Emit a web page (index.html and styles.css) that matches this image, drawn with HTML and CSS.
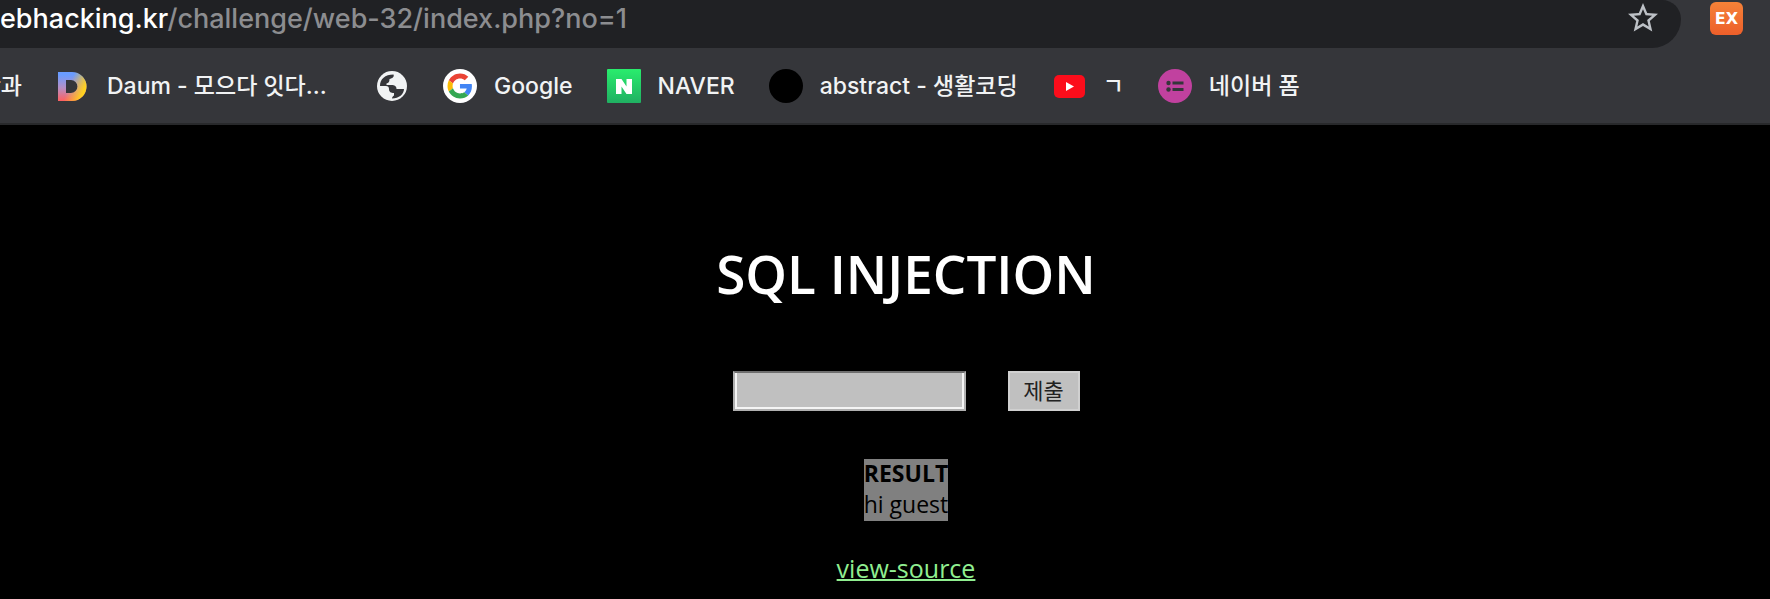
FILE: index.html
```html
<!DOCTYPE html>
<html lang="ko">
<head>
  <meta charset="UTF-8" />
  <meta name="viewport" content="width=device-width, initial-scale=1.0" />
  <title>SQL INJECTION</title>
  <link rel="stylesheet" href="styles.css">
</head>
<body>
  <header class="toolbar">
    <div class="address">
      <p class="url"><span class="host">ebhacking.kr</span>/challenge/web-32/index.php?no=1</p>
      <button class="star" aria-label="Bookmark">
        <svg width="36" height="36" viewBox="0 0 24 24" fill="#bdc1c6"><path d="M22 9.24l-7.19-.62L12 2 9.19 8.63 2 9.24l5.46 4.73L5.82 21 12 17.27 18.18 21l-1.63-7.03L22 9.24zM12 15.4l-3.76 2.27 1-4.28-3.32-2.88 4.38-.38L12 6.1l1.71 4.04 4.38.38-3.32 2.88 1 4.28L12 15.4z"/></svg>
      </button>
    </div>
    <button class="extension">EX</button>
  </header>

  <nav class="bookmarks">
    <a class="bookmark clipped" href="#">학과</a>
    <a class="bookmark long" href="#">
      <svg class="icon" viewBox="0 0 34 34">
        <defs>
          <linearGradient id="daum" x1="0" y1="0" x2="0" y2="1"><stop offset="0.1" stop-color="#6a9cff"/><stop offset="0.55" stop-color="#b78fc4"/><stop offset="1" stop-color="#ff5f5f"/></linearGradient>
          <linearGradient id="daumRight" x1="0" y1="0" x2="1" y2="0.4"><stop offset="0.5" stop-color="#ffc820" stop-opacity="0"/><stop offset="1" stop-color="#ffd21f"/></linearGradient>
        </defs>
        <path fill="url(#daum)" fill-rule="evenodd" d="M2 3h14a14.500 14.500 0 0 1 0 29H2zM10 11v13h5a6.500 6.500 0 0 0 0-13z"/>
        <path fill="url(#daumRight)" fill-rule="evenodd" d="M2 3h14a14.500 14.500 0 0 1 0 29H2zM10 11v13h5a6.500 6.500 0 0 0 0-13z"/>
      </svg>
      <span>Daum - 모으다 잇다...</span>
    </a>
    <a class="bookmark" href="#" aria-label="Page">
      <svg class="icon" viewBox="0 0 34 34">
        <circle cx="17" cy="17" r="15" fill="#f1f3f4"/>
        <path fill="#35363a" d="M5 17C5 10 10 5.500 18.500 5.500c1 2-1 4-4 4.500 0 3-1 4-3 4.500v1.500h5c3 0 5 1 5 4h7.500c0 5-5 9.500-12 9.500 0-1.500 1-2.500 2-3v-2.500c-3 0-5-1-5-4 0-2-1-3-3-3z"/>
      </svg>
    </a>
    <a class="bookmark" href="#">
      <svg class="icon" viewBox="0 0 34 34">
        <circle cx="17" cy="17" r="17" fill="#fff"/>
        <g transform="translate(4.500 4.500) scale(.52)">
          <path fill="#EA4335" d="M24 9.500c3.540 0 6.710 1.220 9.210 3.600l6.850-6.850C35.900 2.380 30.470 0 24 0 14.620 0 6.510 5.380 2.560 13.220l7.980 6.190C12.430 13.720 17.740 9.500 24 9.500z"/>
          <path fill="#4285F4" d="M46.980 24.550c0-1.570-.15-3.090-.38-4.550H24v9.020h12.940c-.58 2.960-2.260 5.480-4.780 7.180l7.730 6c4.510-4.180 7.090-10.360 7.090-17.650z"/>
          <path fill="#FBBC05" d="M10.530 28.590c-.48-1.450-.76-2.990-.76-4.590s.27-3.140.76-4.590l-7.980-6.190C.92 16.460 0 20.120 0 24c0 3.880.92 7.540 2.560 10.780l7.970-6.190z"/>
          <path fill="#34A853" d="M24 48c6.480 0 11.930-2.130 15.890-5.810l-7.730-6c-2.150 1.450-4.920 2.300-8.160 2.300-6.260 0-11.570-4.220-13.470-9.910l-7.980 6.190C6.510 42.620 14.620 48 24 48z"/>
        </g>
      </svg>
      <span>Google</span>
    </a>
    <a class="bookmark" href="#">
      <svg class="icon" viewBox="0 0 34 34">
        <defs><linearGradient id="naver" x1="0" y1="0" x2="0" y2="1"><stop offset="0" stop-color="#29ed6d"/><stop offset="1" stop-color="#20b062"/></linearGradient></defs>
        <rect width="34" height="34" rx="1" fill="url(#naver)"/>
        <path fill="#fff" d="M9 10h5.500l5 7.500V10H25v15h-5.500l-5-7.500V25H9z"/>
      </svg>
      <span>NAVER</span>
    </a>
    <a class="bookmark" href="#">
      <svg class="icon" viewBox="0 0 34 34"><circle cx="17" cy="17" r="17" fill="#000"/></svg>
      <span>abstract - 생활코딩</span>
    </a>
    <a class="bookmark" href="#">
      <svg class="icon" viewBox="0 0 34 34">
        <rect x="2" y="6" width="31" height="23" rx="5" fill="#fc0d1b"/>
        <path fill="#fff" d="M14 13l8 4.500-8 4.500z"/>
      </svg>
      <span>ㄱ</span>
    </a>
    <a class="bookmark" href="#">
      <svg class="icon" viewBox="0 0 34 34">
        <circle cx="17" cy="17" r="17" fill="#c1419f"/>
        <g fill="#35363a"><circle cx="10.500" cy="14" r="2.200"/><circle cx="10.500" cy="20.500" r="2.200"/><rect x="14.500" y="12.500" width="11" height="3"/><rect x="14.500" y="19" width="11" height="3"/></g>
      </svg>
      <span>네이버 폼</span>
    </a>
  </nav>

  <main class="page">
    <h1>SQL INJECTION</h1>
    <form class="query">
      <input type="text" name="no" aria-label="no" />
      <button type="submit">제출</button>
    </form>
    <p class="result"><mark><b>RESULT</b></mark><mark>hi guest</mark></p>
    <a class="source" href="#">view-source</a>
  </main>
</body>
</html>
```

FILE: styles.css
```css
* {
  box-sizing: border-box;
}

body {
  margin: 0;
  background-color: #000;
  overflow: hidden;
}

button {
  border: none;
  padding: 0;
}

.toolbar {
  display: flex;
  align-items: flex-start;
  gap: 29px;
  height: 48px;
  padding-right: 27px;
  background-color: #35363a;
}

.address {
  flex: 1;
  display: flex;
  justify-content: space-between;
  height: 48px;
  padding-right: 20px;
  background-color: #202124;
  border-radius: 0 19px 29px 0;
}

.url {
  margin: 0;
  font-family: Inter, sans-serif;
  font-size: 27px;
  font-weight: 500;
  line-height: 38px;
  color: #8c8d90;
}

.host {
  color: #fff;
}

.star {
  height: 36px;
  background: none;
}

.star svg {
  display: block;
}

.extension {
  width: 33px;
  height: 33px;
  margin-top: 2px;
  border-radius: 6px;
  background: linear-gradient(#f58238, #ed5f2a);
  color: #fff;
  font-family: "DejaVu Sans", sans-serif;
  font-size: 16px;
  font-weight: 700;
}

.bookmarks {
  display: flex;
  align-items: center;
  gap: 34px;
  height: 77px;
  background-color: #35363a;
  border-bottom: 2px solid #28292b;
}

.bookmark {
  display: flex;
  align-items: center;
  gap: 17px;
  color: #f1f3f4;
  font-family: Inter, "Noto Sans CJK KR", sans-serif;
  font-size: 23px;
  font-weight: 500;
  line-height: 34px;
  text-decoration: none;
  white-space: nowrap;
}

.clipped {
  justify-content: flex-end;
  width: 22px;
  overflow: hidden;
}

.long {
  width: 285px;
}

.icon {
  width: 34px;
  height: 34px;
  flex-shrink: 0;
}

.page {
  display: flex;
  flex-direction: column;
  align-items: center;
  padding: 111px 0 0 42px;
  font-family: "Open Sans", "Noto Sans CJK KR", sans-serif;
}

h1 {
  margin: 0;
  color: #fff;
  font-size: 53px;
  font-weight: 600;
  line-height: 76px;
}

.query {
  display: flex;
  gap: 42px;
  margin-top: 59px;
}

.query input {
  width: 233px;
  height: 40px;
  padding: 2px 4px;
  background-color: silver;
  border: 2px solid #b0b0b0;
  border-top-color: #6e6e6e;
  border-radius: 0;
  box-shadow: inset 2px -2px #f4f4f4, inset -2px 0 #f4f4f4;
}

.query button {
  width: 72px;
  height: 40px;
  padding-bottom: 4px;
  background-color: silver;
  border: 2px solid #d0d0d0;
  color: #222;
  font-family: "Noto Sans CJK KR", sans-serif;
  font-size: 22px;
  line-height: 30px;
}

.result {
  display: flex;
  flex-direction: column;
  align-items: center;
  margin: 48px 0 0;
}

.result mark {
  padding-bottom: 3px;
  background-color: gray;
  color: #000;
  font-size: 23px;
  line-height: 28px;
}

.source {
  margin-top: 31px;
  color: lightgreen;
  font-size: 25px;
  line-height: 32px;
  text-decoration-thickness: 2px;
}
```
